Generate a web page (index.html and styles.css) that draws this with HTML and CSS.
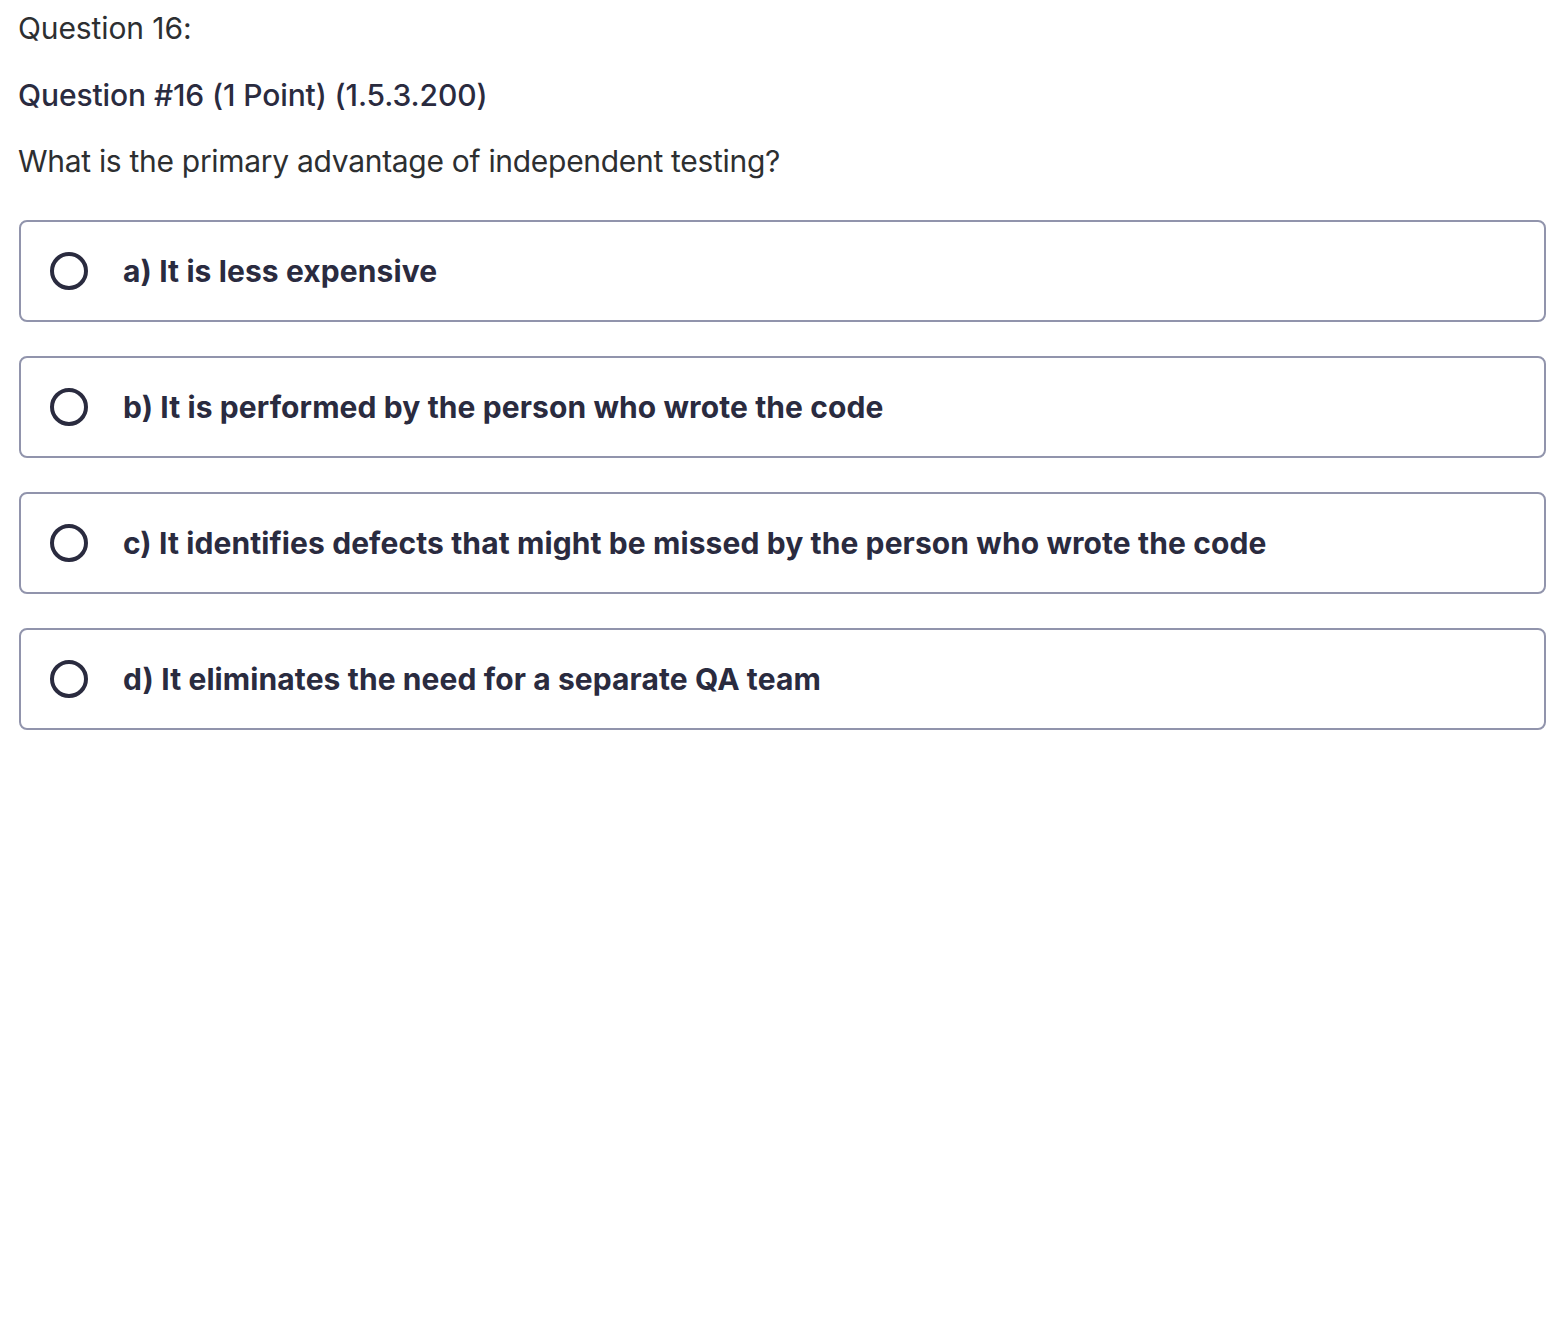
FILE: index.html
```html
<!DOCTYPE html>
<html lang="en">
<head>
<meta charset="utf-8">
<title>Question 16</title>
<link rel="stylesheet" href="styles.css">
</head>
<body>
<main class="quiz">
  <div class="q-num">Question 16:</div>
  <div class="q-title">Question #16 (1 Point) (1.5.3.200)</div>
  <div class="q-text">What is the primary advantage of independent testing?</div>
  <ul class="options">
    <li class="option"><span class="radio"></span><span class="label">a) It is less expensive</span></li>
    <li class="option"><span class="radio"></span><span class="label">b) It is performed by the person who wrote the code</span></li>
    <li class="option"><span class="radio"></span><span class="label">c) It identifies defects that might be missed by the person who wrote the code</span></li>
    <li class="option"><span class="radio"></span><span class="label">d) It eliminates the need for a separate QA team</span></li>
  </ul>
</main>
</body>
</html>
```

FILE: styles.css
```css
html, body {
  margin: 0;
  padding: 0;
  background: #ffffff;
}
body {
  font-family: Inter, "Noto Sans", "Liberation Sans", sans-serif;
  color: #2d2f31;
}
.quiz {
  padding: 8px 20px 0 18px;
}
.q-num {
  font-size: 30px;
  font-weight: 400;
  line-height: 40px;
  color: #2d2f31;
  letter-spacing: -0.1px;
}
.q-title {
  margin-top: 27px;
  font-size: 30px;
  font-weight: 500;
  line-height: 40px;
  color: #2a2b3f;
  letter-spacing: -0.1px;
}
.q-text {
  margin-top: 26px;
  font-size: 30px;
  font-weight: 400;
  line-height: 40px;
  color: #2d2f31;
  letter-spacing: -0.3px;
}
.options {
  list-style: none;
  margin: 39px 0 0 1px;
  padding: 0;
  display: flex;
  flex-direction: column;
  gap: 34px;
}
.option {
  box-sizing: border-box;
  height: 102px;
  border: 2px solid #9194ac;
  border-radius: 8px;
  display: flex;
  align-items: center;
  padding-left: 29px;
}
.radio {
  box-sizing: border-box;
  width: 38px;
  height: 38px;
  border: 4px solid #2a2b3f;
  border-radius: 50%;
  flex: none;
}
.label {
  margin-left: 35px;
  font-size: 30px;
  font-weight: 700;
  color: #2a2b3f;
  letter-spacing: 0.1px;
}
```
